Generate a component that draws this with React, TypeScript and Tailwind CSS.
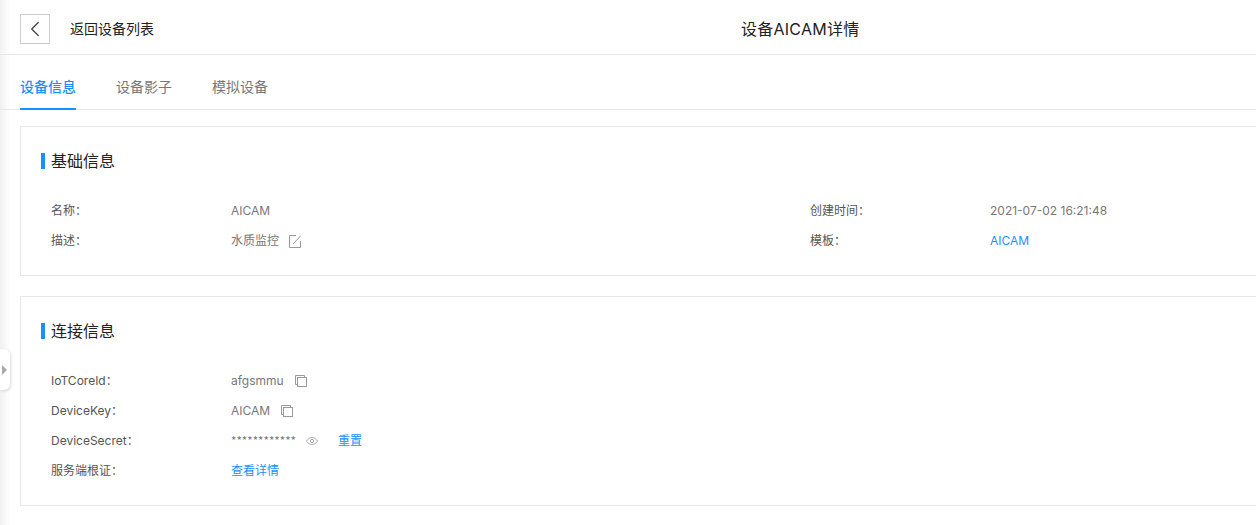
import { ChevronLeft } from 'lucide-react';

const FONT = "font-['Inter','Noto_Sans_CJK_SC',sans-serif]";

function CopyIcon() {
  return (
    <svg width="12" height="12" viewBox="0 0 12 12" fill="none" stroke="#999" strokeWidth="1" className="ml-[11px]">
      <path d="M2.5 9.5H0.5V0.5H9.5V2.5" />
      <rect x="2.5" y="2.5" width="9" height="9" />
    </svg>
  );
}

function EditIcon() {
  return (
    <svg width="12" height="13" viewBox="0 0 12 13" fill="none" stroke="#999" strokeWidth="1" className="ml-[10px]">
      <path d="M7 0.5H0.5V12.5H11.5V6" />
      <path d="M4 9L11.5 1" />
    </svg>
  );
}

function EyeIcon() {
  return (
    <svg width="12" height="8" viewBox="0 0 12 8" fill="none" stroke="#aaa" strokeWidth="1" className="ml-[10px]">
      <path d="M0.5 4C2 1.5 4 0.5 6 0.5C8 0.5 10 1.5 11.5 4C10 6.5 8 7.5 6 7.5C4 7.5 2 6.5 0.5 4Z" />
      <circle cx="6" cy="4" r="1.7" />
    </svg>
  );
}

function Row({ label, children }: { label: string; children: React.ReactNode }) {
  return (
    <div className="flex h-[30px] items-center text-xs">
      <div className="w-[180px] text-[#555]">{label}：</div>
      <div className="flex items-center text-[#777]">{children}</div>
    </div>
  );
}

function SectionTitle({ title }: { title: string }) {
  return (
    <div className="flex h-4 items-center">
      <div className="h-4 w-1 bg-[#1890ff]" />
      <h2 className="ml-[6px] text-base text-[#222]">{title}</h2>
    </div>
  );
}

export default function App() {
  return (
    <div className={`${FONT} relative h-[525px] w-[1256px] overflow-hidden bg-white`}>
      {/* left edge shadow from the collapsed sidebar */}
      <div className="absolute left-0 top-0 h-full w-[10px] bg-gradient-to-r from-[#f1f1f1] to-white" />
      <div className="absolute left-0 top-[349px] flex h-[41px] w-[10px] items-center rounded-r-md bg-white pl-[2px] shadow-[1px_1px_3px_rgba(0,0,0,0.15)]">
        <div className="h-0 w-0 border-y-[5px] border-l-[5px] border-y-transparent border-l-[#aaa]" />
      </div>

      {/* Header */}
      <div className="relative flex h-[55px] items-center border-b border-[#e6e6e6] pl-5">
        <button className="mt-[4px] flex h-[30px] w-[30px] items-center justify-center border border-[#ccc] bg-white">
          <ChevronLeft size={26} strokeWidth={1.2} className="text-[#444]" />
        </button>
        <span className="ml-5 mt-[3px] text-sm text-[#222]">返回设备列表</span>
        <span className="absolute left-[741px] mt-[3px] text-base tracking-[0.25px] text-[#222]">设备AICAM详情</span>
      </div>

      {/* Tabs */}
      <div className="relative flex h-[55px] gap-10 border-b border-[#e8e8e8] pl-5 text-sm">
        <div className="relative flex h-[54px] items-center pt-[10px] font-medium text-[#1890ff]">
          设备信息
          <div className="absolute bottom-[-1px] left-0 h-[2px] w-full bg-[#1890ff]" />
        </div>
        <div className="flex h-[54px] items-center pt-[10px] text-[#777]">设备影子</div>
        <div className="flex h-[54px] items-center pt-[10px] text-[#777]">模拟设备</div>
      </div>

      {/* Basic info */}
      <div className="ml-5 mt-4 h-[150px] w-[1260px] border border-[#e8e8e8] pl-5 pt-[26px]">
        <SectionTitle title="基础信息" />
        <div className="mt-[27px] flex pl-[10px]">
          <div className="w-[759px]">
            <Row label="名称">AICAM</Row>
            <Row label="描述">
              水质监控
              <EditIcon />
            </Row>
          </div>
          <div>
            <Row label="创建时间">2021-07-02 16:21:48</Row>
            <Row label="模板">
              <span className="text-[#1890ff]">AICAM</span>
            </Row>
          </div>
        </div>
      </div>

      {/* Connection info */}
      <div className="ml-5 mt-5 h-[210px] w-[1260px] border border-[#e8e8e8] pl-5 pt-[26px]">
        <SectionTitle title="连接信息" />
        <div className="mt-[27px] pl-[10px]">
          <Row label="IoTCoreId">
            afgsmmu
            <CopyIcon />
          </Row>
          <Row label="DeviceKey">
            AICAM
            <CopyIcon />
          </Row>
          <Row label="DeviceSecret">
            <span className="w-[65px] overflow-hidden font-['Noto_Sans_CJK_SC',sans-serif] text-[11.6px]">************</span>
            <EyeIcon />
            <span className="ml-5 text-[#1890ff]">重置</span>
          </Row>
          <Row label="服务端根证">
            <span className="text-[#1890ff]">查看详情</span>
          </Row>
        </div>
      </div>
    </div>
  );
}
